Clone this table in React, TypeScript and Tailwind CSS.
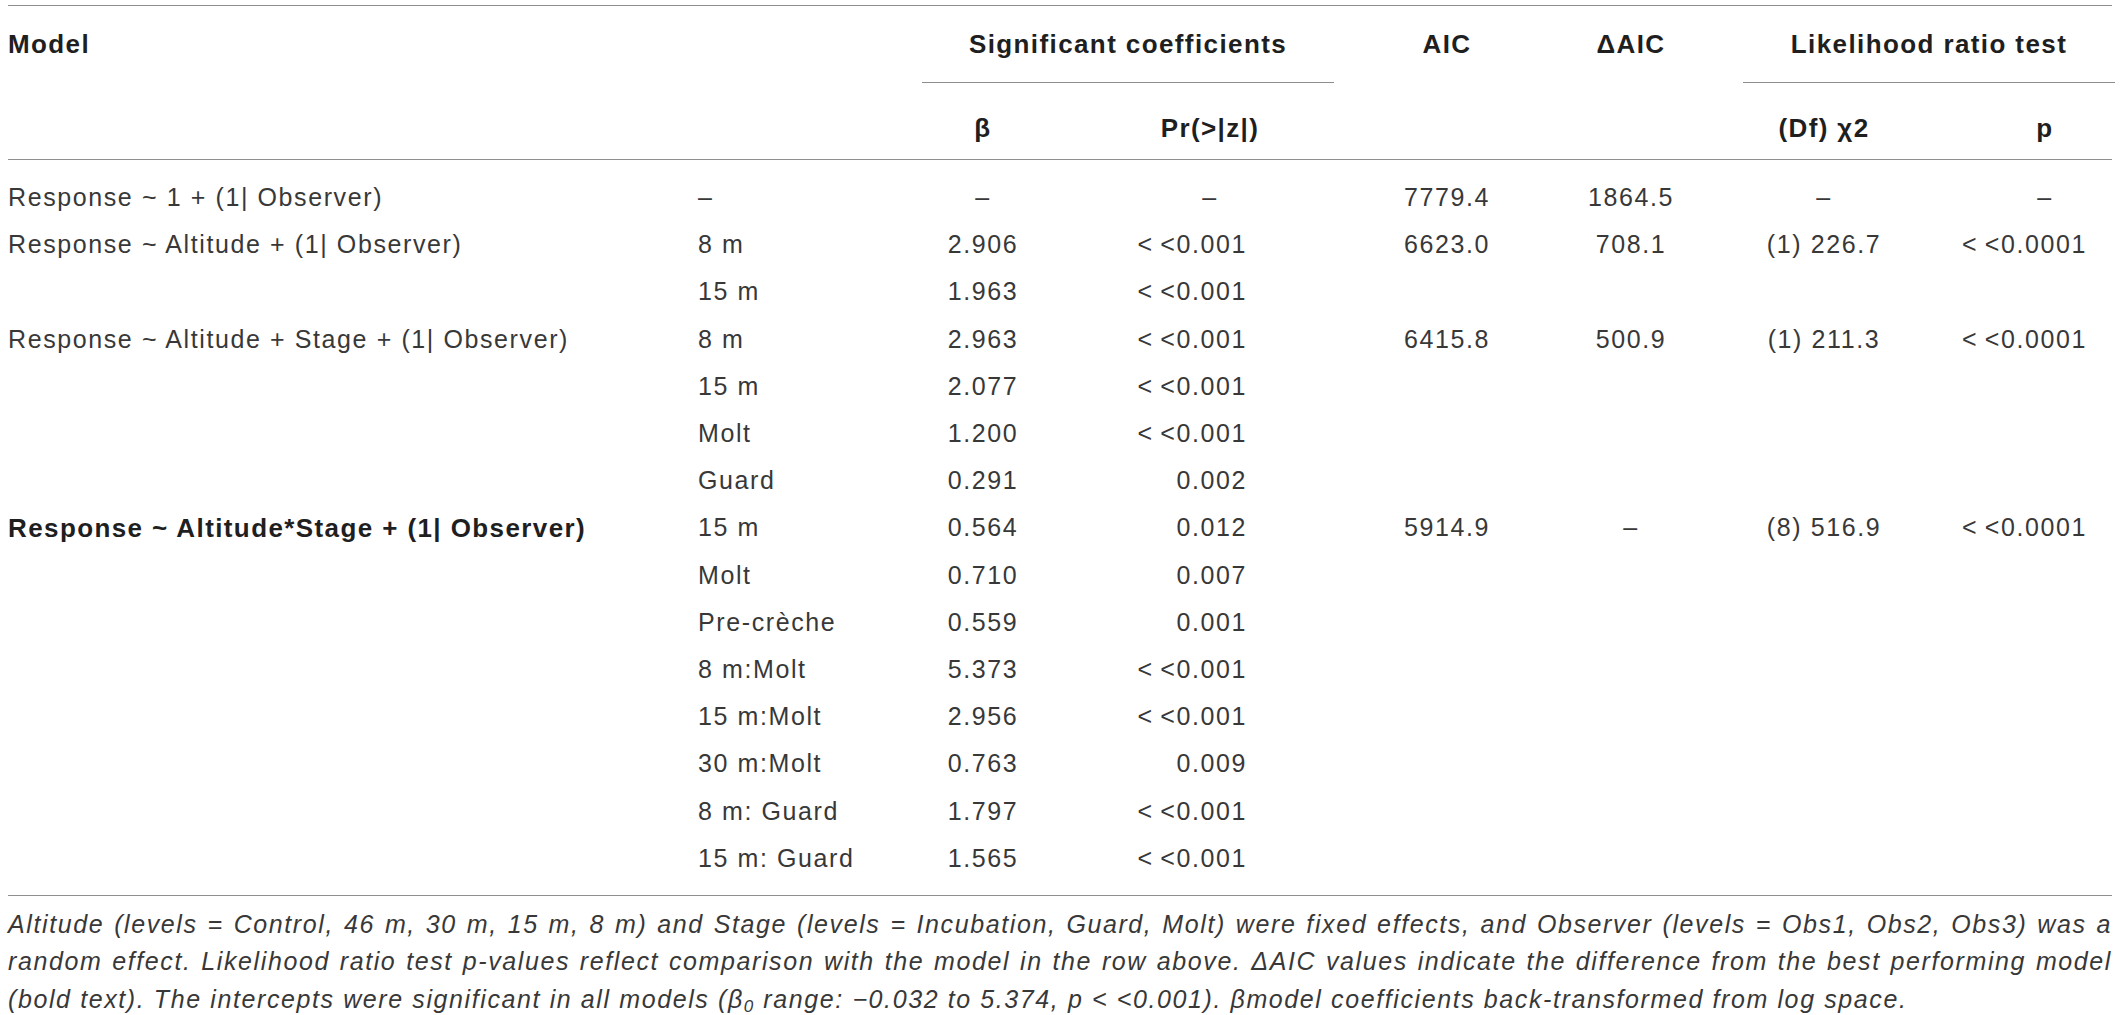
const cols = 'grid grid-cols-[690px_224px_122px_290px_226px_183px_162px_210px]'

type Row = {
  model?: string
  bold?: boolean
  coef: string
  beta: string
  pr: string
  aic?: string
  daic?: string
  chi?: string
  p?: string
}

const LT = '<\u2009<'

const rows: Row[] = [
  { model: 'Response ~ 1 + (1| Observer)', coef: '–', beta: '–', pr: '–', aic: '7779.4', daic: '1864.5', chi: '–', p: '–' },
  { model: 'Response ~ Altitude + (1| Observer)', coef: '8 m', beta: '2.906', pr: `${LT}0.001`, aic: '6623.0', daic: '708.1', chi: '(1) 226.7', p: `${LT}0.0001` },
  { coef: '15 m', beta: '1.963', pr: `${LT}0.001` },
  { model: 'Response ~ Altitude + Stage + (1| Observer)', coef: '8 m', beta: '2.963', pr: `${LT}0.001`, aic: '6415.8', daic: '500.9', chi: '(1) 211.3', p: `${LT}0.0001` },
  { coef: '15 m', beta: '2.077', pr: `${LT}0.001` },
  { coef: 'Molt', beta: '1.200', pr: `${LT}0.001` },
  { coef: 'Guard', beta: '0.291', pr: '0.002' },
  { model: 'Response ~ Altitude*Stage + (1| Observer)', bold: true, coef: '15 m', beta: '0.564', pr: '0.012', aic: '5914.9', daic: '–', chi: '(8) 516.9', p: `${LT}0.0001` },
  { coef: 'Molt', beta: '0.710', pr: '0.007' },
  { coef: 'Pre-crèche', beta: '0.559', pr: '0.001' },
  { coef: '8 m:Molt', beta: '5.373', pr: `${LT}0.001` },
  { coef: '15 m:Molt', beta: '2.956', pr: `${LT}0.001` },
  { coef: '30 m:Molt', beta: '0.763', pr: '0.009' },
  { coef: '8 m: Guard', beta: '1.797', pr: `${LT}0.001` },
  { coef: '15 m: Guard', beta: '1.565', pr: `${LT}0.001` },
]

const head = 'text-[26px] font-bold tracking-[1.4px] text-[#1f1f1f] leading-none'

function BodyRow({ row }: { row: Row }) {
  const prDash = row.pr === '–'
  const pDash = row.p === '–'
  return (
    <div className={`${cols} h-[47.2px] items-center`}>
      <div className={row.bold ? 'text-[26px] font-bold tracking-[1.4px] text-[#1f1f1f]' : ''}>{row.model}</div>
      <div>{row.coef}</div>
      <div className="text-center">{row.beta}</div>
      <div className={prDash ? 'pl-[42px] text-center' : 'pr-[87px] text-right'}>{row.pr}</div>
      <div className="text-center">{row.aic}</div>
      <div className="pr-[41px] text-center">{row.daic}</div>
      <div className="text-center">{row.chi}</div>
      <div className={pDash ? 'pl-[70px] text-center' : 'pr-[28px] text-right'}>{row.p}</div>
    </div>
  )
}

export default function App() {
  return (
    <div className="min-h-screen bg-white px-[8px] pt-[5px] font-['Liberation_Sans',Arial,Helvetica,sans-serif] text-[25px] leading-none tracking-[1.6px] text-[#383838]">
      <div className="border-t border-[#8e8e8e]">
        <div className={`${cols} grid-rows-[77px_76px] border-b border-[#8e8e8e]`}>
          <div className="col-start-1 row-span-2 row-start-1">
            <div className={`flex h-[76px] items-center ${head}`}>Model</div>
          </div>
          <div className="col-start-2 row-span-2 row-start-1" />
          <div className={`col-span-2 col-start-3 row-start-1 flex items-center justify-center border-b border-[#8e8e8e] ${head}`}>
            Significant coefficients
          </div>
          <div className="col-start-5 row-span-2 row-start-1">
            <div className={`flex h-[76px] items-center justify-center ${head}`}>AIC</div>
          </div>
          <div className="col-start-6 row-span-2 row-start-1">
            <div className={`flex h-[76px] items-center justify-center pr-[41px] ${head}`}>ΔAIC</div>
          </div>
          <div className={`col-span-2 col-start-7 row-start-1 flex items-center justify-center border-b border-[#8e8e8e] ${head}`}>
            Likelihood ratio test
          </div>
          <div className={`col-start-3 row-start-2 flex items-center justify-center pt-[14px] ${head}`}>β</div>
          <div className={`col-start-4 row-start-2 flex items-center justify-center pl-[42px] pt-[14px] ${head}`}>Pr(&gt;|z|)</div>
          <div className={`col-start-7 row-start-2 flex items-center justify-center pt-[14px] ${head}`}>(Df) χ2</div>
          <div className={`col-start-8 row-start-2 flex items-center justify-center pl-[70px] pt-[14px] ${head}`}>p</div>
        </div>

        <div className="border-b border-[#8e8e8e] pb-[13px] pt-[14px]">
          {rows.map((row, i) => (
            <BodyRow key={i} row={row} />
          ))}
        </div>
      </div>

      <div className="pt-[10px] italic leading-[37.5px]">
        <p className="text-justify [text-align-last:justify]">
          Altitude (levels = Control, 46 m, 30 m, 15 m, 8 m) and Stage (levels = Incubation, Guard, Molt) were fixed effects, and Observer (levels = Obs1, Obs2, Obs3) was a
        </p>
        <p className="text-justify [text-align-last:justify]">
          random effect. Likelihood ratio test p-values reflect comparison with the model in the row above. ΔAIC values indicate the difference from the best performing model
        </p>
        <p>
          (bold text). The intercepts were significant in all models (β<sub className="text-[17px]">0</sub> range: −0.032 to 5.374, p &lt; &lt;0.001). βmodel coefficients back-transformed from log space.
        </p>
      </div>
    </div>
  )
}
